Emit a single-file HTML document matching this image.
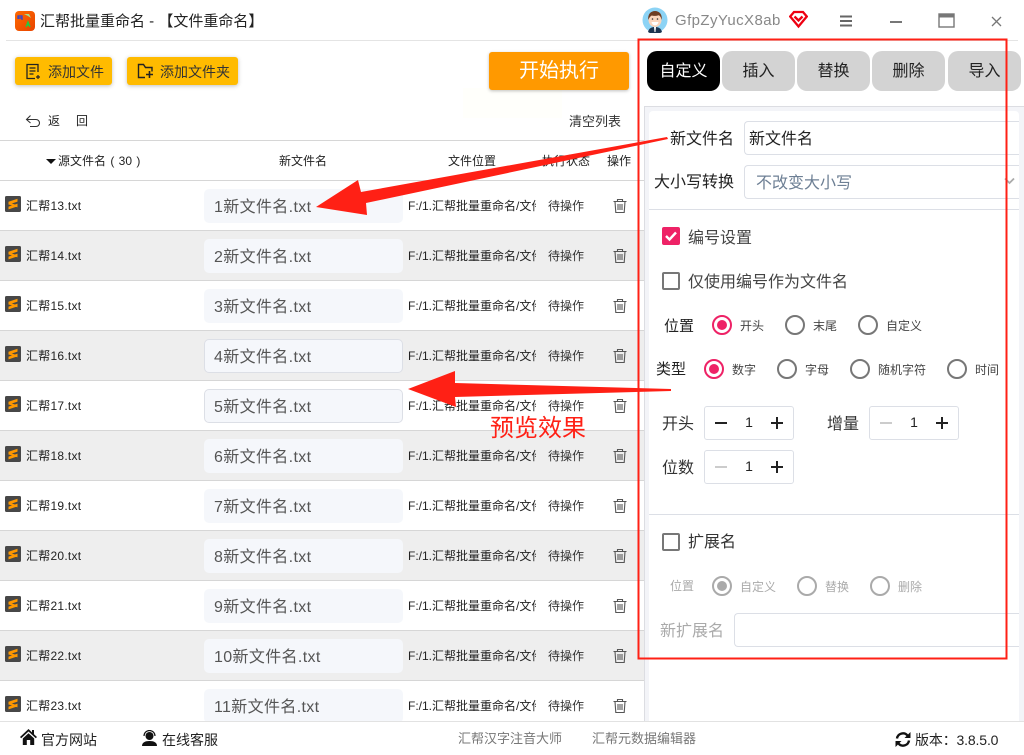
<!DOCTYPE html>
<html lang="zh"><head><meta charset="utf-8"><title>汇帮批量重命名</title>
<style>
html,body{margin:0;padding:0;width:1024px;height:755px;overflow:hidden;background:#fff}
body{position:relative;font-family:"Liberation Sans","Noto Sans CJK SC",sans-serif;color:#222}
.a,.t{position:absolute}
.t{white-space:nowrap;line-height:20px;height:20px}
.row{position:absolute;left:0;width:644px;height:50px;border-bottom:1px solid #d6d6d6;box-sizing:border-box;overflow:hidden}
.row.g{background:#eeeeee}
.row .ic{position:absolute;left:5px;top:15px;width:16px;height:16px}
.row .n{position:absolute;left:26px;top:15px;font-size:12px;line-height:20px;color:#222;letter-spacing:.25px}
.row .b{position:absolute;left:204px;top:8px;width:199px;height:34px;box-sizing:border-box;background:#f5f7fb;border-radius:5px;font-size:16px;line-height:38px;padding-left:10px;color:#555;letter-spacing:.35px}
.row .b.o{border:1px solid #dcdfe6;line-height:36px;padding-left:9px}
.row .p{position:absolute;left:408px;top:15px;width:128px;overflow:hidden;white-space:nowrap;font-size:12px;line-height:20px;color:#222}
.row .s{position:absolute;left:548px;top:15px;font-size:12px;line-height:20px;color:#333}
.row .d{position:absolute;left:612px;top:17px;width:16px;height:16px}
.tab{position:absolute;top:51px;height:40px;width:73px;border-radius:10px;background:#d3d3d3;font-size:16px;line-height:41px;text-align:center;color:#222}
.btn{position:absolute;top:57px;height:28px;background:#ffbb00;border-radius:3px;box-shadow:0 1px 4px rgba(0,0,0,.25);font-size:14px;line-height:30px;color:#333}
.inp{position:absolute;box-sizing:border-box;background:#fff;border:1px solid #dcdfe6;border-right:0;border-radius:4px 0 0 4px;height:34px}
.cb{position:absolute;left:662px;width:18px;height:18px;box-sizing:border-box;border:2px solid #777;border-radius:2px;background:#fff}
.r{position:absolute;width:20px;height:20px;box-sizing:border-box;border:2px solid #777;border-radius:50%;background:#fff}
.r.on{border-color:#ee2266}
.r.on:after{content:"";position:absolute;left:3px;top:3px;width:10px;height:10px;border-radius:50%;background:#ee2266}
.r.dis{border-color:#aaa}
.r.dis.on:after{background:#aaa}
.st{position:absolute;width:90px;height:34px;box-sizing:border-box;border:1px solid #dcdfe6;border-radius:3px;background:#fff;font-size:14px;line-height:30px;text-align:center;color:#222}
.st i,.st b{position:absolute;height:2px;width:12px;top:15px;background:#222}
.st i{left:10px}.st b{right:10px}
.st b:after{content:"";position:absolute;left:5px;top:-5px;width:2px;height:12px;background:#222}
.st i.off{background:#ccc}
</style></head><body>
<svg width="0" height="0" style="position:absolute">
<symbol id="sub" viewBox="0 0 16 16"><rect width="16" height="16" rx="1.5" fill="#474747"/><path d="M3.500 5.800 12.500 2.800V5.600L3.500 8.600zM3.500 6.400 12.500 9.400V11.400L3.500 8.400zM3.500 10.600 12.500 7.600V10.400L3.500 13.400z" fill="#ff9800"/></symbol>
<symbol id="tr" viewBox="0 0 16 16"><path d="M1.500 3.500h13M5.500 3.500V1.500h5v2M3 3.500l.8 11h8.400l.8-11" fill="none" stroke="#555" stroke-width="1.100"/><path d="M6 6v6M8 6v6M10 6v6" stroke="#666" stroke-width="1.200"/></symbol>
</svg>

<!-- title bar -->
<div class="a" style="left:15px;top:11px;width:20px;height:20px;border-radius:4px;background:linear-gradient(135deg,#ff6a00,#e84400)"></div>
<svg class="a" style="left:15px;top:11px" width="20" height="20"><path d="M3 8V5h4v4M3 7h4" stroke="#2244dd" stroke-width="1.200" fill="none"/><path d="M9 3h5l2 4-3-2z" fill="#a6e08a"/><path d="M11 16l2-5 2 5M12 14h2" stroke="#22cc44" stroke-width="1.400" fill="none"/></svg>
<div class="t" style="left:40px;top:12px;font-size:15px;color:#222">汇帮批量重命名 - 【文件重命名】</div>
<div class="a" style="left:6px;top:40px;width:1012px;height:1px;background:#e4e4e4"></div>

<svg class="a" style="left:642px;top:7px" width="26" height="26" viewBox="0 0 26 26">
<circle cx="13" cy="13" r="12.500" fill="#8cd3f5"/>
<path d="M6 25c1-4 4-5 7-5s6 1 7 5a12.500 12.500 0 0 1-14 0z" fill="#1d3550"/>
<path d="M12 20h2l-.5 5h-1z" fill="#fff"/>
<ellipse cx="13" cy="13" rx="6.500" ry="7" fill="#fbd6bd"/>
<path d="M6.300 13c-.8-6 2.700-9 6.700-9s7.500 3 6.700 9c-.8-3.200-1.800-4.300-3-4.800-2 .8-5.500.8-7 .3-1.500.8-2.500 2.300-3.400 4.500z" fill="#6e3d22"/>
<circle cx="10.500" cy="12" r=".8" fill="#333"/><circle cx="15.500" cy="12" r=".8" fill="#333"/>
<path d="M9.500 15h7c-.5 2.200-1.800 3.300-3.500 3.300S10 17.200 9.500 15z" fill="#fff"/>
</svg>
<div class="t" style="left:675px;top:11px;font-size:15px;color:#888;letter-spacing:.4px">GfpZyYucX8ab</div>
<svg class="a" style="left:789px;top:10px" width="19" height="19" viewBox="0 0 19 19"><path d="M5 2h9l3.800 4.500-8.300 10L1.200 6.500z" fill="#fff" stroke="#ee0011" stroke-width="2.300"/><path d="M5.500 6.500l4 4 4-4" fill="none" stroke="#ee0011" stroke-width="2.300"/></svg>
<svg class="a" style="left:840px;top:15px" width="13" height="12"><path d="M0 1.500h12M0 6h12M0 10.500h12" stroke="#666" stroke-width="1.900"/></svg>
<div class="a" style="left:890px;top:21px;width:12px;height:2px;background:#777"></div>
<svg class="a" style="left:938px;top:13px" width="17" height="15"><rect x="1" y="1" width="15" height="13" fill="#fff" stroke="#777" stroke-width="1.400"/><rect x="1" y="1" width="15" height="3.500" fill="#777"/></svg>
<svg class="a" style="left:991px;top:16px" width="11" height="11"><path d="M1 1l9 9M10 1L1 10" stroke="#777" stroke-width="1.300"/></svg>

<!-- toolbar -->
<div class="btn" style="left:15px;width:97px;padding-left:33px;box-sizing:border-box">添加文件</div>
<svg class="a" style="left:25px;top:63px" width="16" height="17" viewBox="0 0 16 17"><path d="M13 9V1.500H2v14h8" fill="none" stroke="#222" stroke-width="1.300"/><path d="M4.500 5h6M4.500 8h6M4.500 11h4M11 14h4M13 12v4" stroke="#222" stroke-width="1.200"/></svg>
<div class="btn" style="left:127px;width:111px;padding-left:33px;box-sizing:border-box">添加文件夹</div>
<svg class="a" style="left:137px;top:63px" width="17" height="16" viewBox="0 0 17 16"><path d="M8 14.500H1.500V1.500h5l2 3h6.500v4" fill="none" stroke="#222" stroke-width="1.400"/><path d="M9 11.500h7M12.500 8v7" stroke="#222" stroke-width="1.600"/></svg>
<div class="a" style="left:463px;top:88px;width:99px;height:30px;background:#fffffb"></div>
<div class="a" style="left:489px;top:52px;width:140px;height:38px;background:#ff9900;border-radius:3px;box-shadow:0 1px 3px rgba(0,0,0,.25);color:#fff;font-size:20px;line-height:38px;text-align:center">开始执行</div>

<svg class="a" style="left:25px;top:114px" width="16" height="14" viewBox="0 0 16 14"><path d="M5.500 1.500L1.500 5.500l4 3.500M1.500 5.500H11a3.500 3.500 0 0 1 0 7H5" fill="none" stroke="#333" stroke-width="1.100"/></svg>
<div class="t" style="left:48px;top:111px;font-size:12px">返</div>
<div class="t" style="left:76px;top:111px;font-size:12px">回</div>
<div class="t" style="left:569px;top:112px;font-size:13px;color:#333">清空列表</div>
<div class="a" style="left:0;top:140px;width:644px;height:1px;background:#d6d6d6"></div>

<!-- header -->
<div class="a" style="left:46px;top:159px;width:0;height:0;border-left:5px solid transparent;border-right:5px solid transparent;border-top:5px solid #111"></div>
<div class="t" style="left:58px;top:151px;font-size:12px;color:#222;word-spacing:1px">源文件名 ( 30 )</div>
<div class="t" style="left:279px;top:151px;font-size:12px;color:#222">新文件名</div>
<div class="t" style="left:448px;top:151px;font-size:12px;color:#222">文件位置</div>
<div class="t" style="left:542px;top:151px;font-size:12px;color:#222">执行状态</div>
<div class="t" style="left:607px;top:151px;font-size:12px;color:#222">操作</div>
<div class="a" style="left:0;top:180px;width:644px;height:1px;background:#d6d6d6"></div>

<!-- rows -->
<div class="row" style="top:181px"><svg class="ic"><use href="#sub"/></svg><div class="n">汇帮13.txt</div><div class="b">1新文件名.txt</div><div class="p">F:/1.汇帮批量重命名/文件夹</div><div class="s">待操作</div><svg class="d"><use href="#tr"/></svg></div>
<div class="row g" style="top:231px"><svg class="ic"><use href="#sub"/></svg><div class="n">汇帮14.txt</div><div class="b">2新文件名.txt</div><div class="p">F:/1.汇帮批量重命名/文件夹</div><div class="s">待操作</div><svg class="d"><use href="#tr"/></svg></div>
<div class="row" style="top:281px"><svg class="ic"><use href="#sub"/></svg><div class="n">汇帮15.txt</div><div class="b">3新文件名.txt</div><div class="p">F:/1.汇帮批量重命名/文件夹</div><div class="s">待操作</div><svg class="d"><use href="#tr"/></svg></div>
<div class="row g" style="top:331px"><svg class="ic"><use href="#sub"/></svg><div class="n">汇帮16.txt</div><div class="b o">4新文件名.txt</div><div class="p">F:/1.汇帮批量重命名/文件夹</div><div class="s">待操作</div><svg class="d"><use href="#tr"/></svg></div>
<div class="row" style="top:381px"><svg class="ic"><use href="#sub"/></svg><div class="n">汇帮17.txt</div><div class="b o">5新文件名.txt</div><div class="p">F:/1.汇帮批量重命名/文件夹</div><div class="s">待操作</div><svg class="d"><use href="#tr"/></svg></div>
<div class="row g" style="top:431px"><svg class="ic"><use href="#sub"/></svg><div class="n">汇帮18.txt</div><div class="b">6新文件名.txt</div><div class="p">F:/1.汇帮批量重命名/文件夹</div><div class="s">待操作</div><svg class="d"><use href="#tr"/></svg></div>
<div class="row" style="top:481px"><svg class="ic"><use href="#sub"/></svg><div class="n">汇帮19.txt</div><div class="b">7新文件名.txt</div><div class="p">F:/1.汇帮批量重命名/文件夹</div><div class="s">待操作</div><svg class="d"><use href="#tr"/></svg></div>
<div class="row g" style="top:531px"><svg class="ic"><use href="#sub"/></svg><div class="n">汇帮20.txt</div><div class="b">8新文件名.txt</div><div class="p">F:/1.汇帮批量重命名/文件夹</div><div class="s">待操作</div><svg class="d"><use href="#tr"/></svg></div>
<div class="row" style="top:581px"><svg class="ic"><use href="#sub"/></svg><div class="n">汇帮21.txt</div><div class="b">9新文件名.txt</div><div class="p">F:/1.汇帮批量重命名/文件夹</div><div class="s">待操作</div><svg class="d"><use href="#tr"/></svg></div>
<div class="row g" style="top:631px"><svg class="ic"><use href="#sub"/></svg><div class="n">汇帮22.txt</div><div class="b">10新文件名.txt</div><div class="p">F:/1.汇帮批量重命名/文件夹</div><div class="s">待操作</div><svg class="d"><use href="#tr"/></svg></div>
<div class="row" style="top:681px;height:40px;border:0"><svg class="ic"><use href="#sub"/></svg><div class="n">汇帮23.txt</div><div class="b">11新文件名.txt</div><div class="p">F:/1.汇帮批量重命名/文件夹</div><div class="s">待操作</div><svg class="d"><use href="#tr"/></svg></div>

<!-- tabs -->
<div class="tab" style="left:647px;background:#000;color:#fff">自定义</div>
<div class="tab" style="left:722px">插入</div>
<div class="tab" style="left:797px">替换</div>
<div class="tab" style="left:872px">删除</div>
<div class="tab" style="left:948px">导入</div>

<!-- panel -->
<div class="a" style="left:644px;top:106px;width:380px;height:615px;background:#f3f4f8;border-left:1px solid #dcdde2;border-top:1px solid #dcdde2;box-sizing:border-box"></div>
<div class="a" style="left:649px;top:111px;width:370px;height:610px;background:#fff;border-radius:4px 4px 0 0"></div>

<div class="t" style="left:670px;top:130px;font-size:16px">新文件名</div>
<div class="inp" style="left:744px;top:121px;width:275px;font-size:16px;line-height:35px;padding-left:4px;color:#222">新文件名</div>
<div class="t" style="left:654px;top:173px;font-size:16px">大小写转换</div>
<div class="inp" style="left:744px;top:165px;width:275px;font-size:16px;line-height:36px;padding-left:11px;color:#6d7f94">不改变大小写</div>
<svg class="a" style="left:1004px;top:177px" width="11" height="8"><path d="M1 1.500l4.500 4.500L10 1.500" fill="none" stroke="#aaa" stroke-width="1.800"/></svg>
<div class="a" style="left:649px;top:209px;width:370px;height:1px;background:#dcdfe6"></div>

<div class="cb" style="top:227px;background:#ee2266;border-color:#ee2266"></div>
<svg class="a" style="left:662px;top:227px" width="18" height="18"><path d="M4 9l3.500 3.500L14 5.500" fill="none" stroke="#fff" stroke-width="2.400"/></svg>
<div class="t" style="left:688px;top:229px;font-size:16px;color:#444">编号设置</div>
<div class="cb" style="top:272px"></div>
<div class="t" style="left:688px;top:273px;font-size:16px;color:#444">仅使用编号作为文件名</div>

<div class="t" style="left:664px;top:317px;font-size:15px;color:#222">位置</div>
<div class="r on" style="left:712px;top:315px"></div><div class="t" style="left:740px;top:316px;font-size:12px;color:#444">开头</div>
<div class="r" style="left:785px;top:315px"></div><div class="t" style="left:813px;top:316px;font-size:12px;color:#444">末尾</div>
<div class="r" style="left:858px;top:315px"></div><div class="t" style="left:886px;top:316px;font-size:12px;color:#444">自定义</div>

<div class="t" style="left:656px;top:360px;font-size:15px;color:#222">类型</div>
<div class="r on" style="left:704px;top:359px"></div><div class="t" style="left:732px;top:360px;font-size:12px;color:#444">数字</div>
<div class="r" style="left:777px;top:359px"></div><div class="t" style="left:805px;top:360px;font-size:12px;color:#444">字母</div>
<div class="r" style="left:850px;top:359px"></div><div class="t" style="left:878px;top:360px;font-size:12px;color:#444">随机字符</div>
<div class="r" style="left:947px;top:359px"></div><div class="t" style="left:975px;top:360px;font-size:12px;color:#444">时间</div>

<div class="t" style="left:662px;top:415px;font-size:16px;color:#333">开头</div>
<div class="st" style="left:704px;top:406px"><i></i>1<b></b></div>
<div class="t" style="left:827px;top:415px;font-size:16px;color:#333">增量</div>
<div class="st" style="left:869px;top:406px"><i class="off"></i>1<b></b></div>
<div class="t" style="left:662px;top:459px;font-size:16px;color:#333">位数</div>
<div class="st" style="left:704px;top:450px"><i class="off"></i>1<b></b></div>
<div class="a" style="left:649px;top:514px;width:370px;height:1px;background:#dcdfe6"></div>

<div class="cb" style="top:533px"></div>
<div class="t" style="left:688px;top:533px;font-size:16px;color:#333">扩展名</div>
<div class="t" style="left:670px;top:576px;font-size:12px;color:#aaa">位置</div>
<div class="r dis on" style="left:712px;top:576px"></div><div class="t" style="left:740px;top:577px;font-size:12px;color:#aaa">自定义</div>
<div class="r dis" style="left:797px;top:576px"></div><div class="t" style="left:825px;top:577px;font-size:12px;color:#aaa">替换</div>
<div class="r dis" style="left:870px;top:576px"></div><div class="t" style="left:898px;top:577px;font-size:12px;color:#aaa">删除</div>
<div class="t" style="left:660px;top:622px;font-size:16px;color:#aaa">新扩展名</div>
<div class="inp" style="left:734px;top:613px;width:285px"></div>

<!-- footer -->
<div class="a" style="left:0;top:721px;width:1024px;height:34px;background:#fff;border-top:1px solid #e2e2e2;box-sizing:border-box"></div>
<svg class="a" style="left:20px;top:729px" width="17" height="16" viewBox="0 0 17 16"><path d="M8.500 0L0 8l1.200 1.200L8.500 2.500l7.300 6.700L17 8l-3-2.800V1h-2v2.400z" fill="#111"/><path d="M2.800 9.500L8.500 4.300l5.700 5.200V16h-4v-5h-3.400v5h-4z" fill="#111"/></svg>
<div class="t" style="left:41px;top:730px;font-size:14px;color:#222">官方网站</div>
<svg class="a" style="left:141px;top:730px" width="17" height="16" viewBox="0 0 17 16"><circle cx="8.500" cy="6" r="4" fill="#111"/><path d="M3 6a5.500 5.500 0 0 1 11 0" fill="none" stroke="#111" stroke-width="1.200"/><path d="M1 16c0-3.500 3-5 7.500-5s7.500 1.500 7.500 5z" fill="#111"/></svg>
<div class="t" style="left:162px;top:730px;font-size:14px;color:#222">在线客服</div>
<div class="t" style="left:458px;top:729px;font-size:13px;color:#777">汇帮汉字注音大师</div>
<div class="t" style="left:592px;top:729px;font-size:13px;color:#777">汇帮元数据编辑器</div>
<svg class="a" style="left:895px;top:732px" width="16" height="15" viewBox="0 0 16 15"><path d="M2 6.500A6 6 0 0 1 12.500 3.500" fill="none" stroke="#111" stroke-width="2.400"/><path d="M15.500 0v6h-6z" fill="#111"/><path d="M14 8.500A6 6 0 0 1 3.500 11.500" fill="none" stroke="#111" stroke-width="2.400"/><path d="M.5 15V9h6z" fill="#111"/></svg>
<div class="t" style="left:915px;top:730px;font-size:14px;color:#222;letter-spacing:-.15px">版本：3.8.5.0</div>

<!-- annotations -->
<svg class="a" style="left:0;top:0;pointer-events:none" width="1024" height="755">
<rect x="638.500" y="39.500" width="368" height="619" fill="none" stroke="#ff2015" stroke-width="2"/>
<polygon points="316,207 358,180 361,192 667,137 668,139 366,203 367,215" fill="#ff2015"/>
<polygon points="408,389 455,371 455,383 671,389 671,391 455,397 456,407" fill="#ff2015"/>
<text x="490" y="436" font-size="24" fill="#ff2015" font-family="'Liberation Sans','Noto Sans CJK SC',sans-serif">预览效果</text>
</svg>
</body></html>
